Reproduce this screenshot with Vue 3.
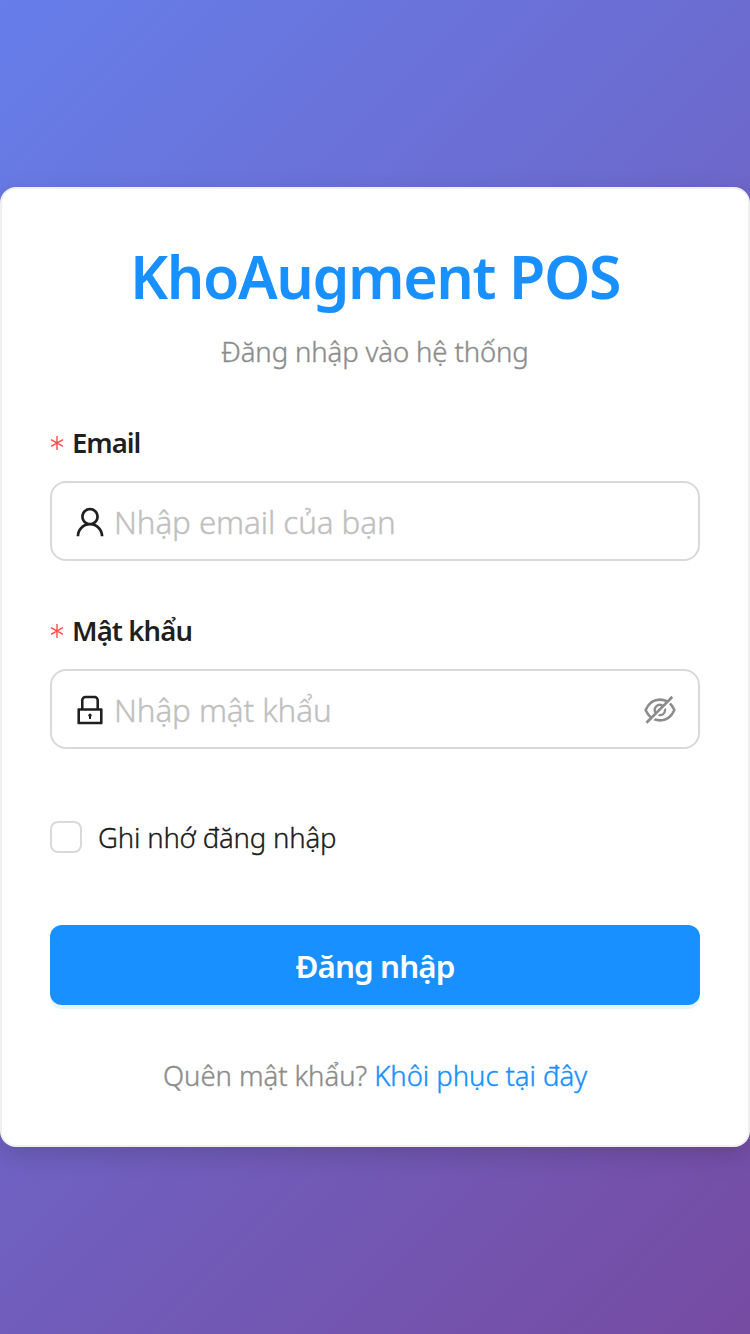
<script setup>
import { ref } from 'vue'
const email = ref('')
const password = ref('')
const remember = ref(false)
</script>

<template>
  <main class="page">
    <form class="card" @submit.prevent>
      <h1>KhoAugment POS</h1>
      <p class="subtitle">Đăng nhập vào hệ thống</p>

      <label class="label" for="email"><svg class="star" viewBox="0 0 14 14"><path d="M7 0V14M1 3.6L13 10.4M13 3.6L1 10.4" /></svg><span class="email-label">Email</span></label>
      <div class="field">
        <svg class="icon" viewBox="64 64 896 896"><path d="M858.5 763.6a374 374 0 0 0-80.6-119.5 375.63 375.63 0 0 0-119.5-80.6c-.4-.2-.8-.3-1.2-.5C719.5 518 760 444.7 760 362c0-137-111-248-248-248S264 225 264 362c0 82.7 40.5 156 102.8 201.1-.4.2-.8.3-1.2.5-44.8 18.9-85 46-119.5 80.6a375.63 375.63 0 0 0-80.6 119.5A371.7 371.7 0 0 0 136 901.8a8 8 0 0 0 8 8.2h60c4.4 0 7.9-3.5 8-7.8 2-77.2 33-149.5 87.8-204.3 56.7-56.7 132-87.9 212.2-87.9s155.5 31.2 212.2 87.9C779 752.7 810 825 812 902.2c.1 4.4 3.6 7.8 8 7.8h60a8 8 0 0 0 8-8.2c-1-47.8-10.9-94.3-29.5-138.2zM512 534c-45.9 0-89.1-17.9-121.6-50.4S340 407.9 340 362c0-45.9 17.9-89.1 50.4-121.6S466.1 190 512 190s89.1 17.9 121.6 50.4S684 316.1 684 362c0 45.9-17.9 89.1-50.4 121.6S557.9 534 512 534z" /></svg>
        <input id="email" v-model="email" type="text" placeholder="Nhập email của bạn" />
      </div>

      <label class="label" for="password"><svg class="star" viewBox="0 0 14 14"><path d="M7 0V14M1 3.6L13 10.4M13 3.6L1 10.4" /></svg><span class="pass-label">Mật khẩu</span></label>
      <div class="field">
        <svg class="icon" viewBox="64 64 896 896"><path d="M832 464h-68V240c0-70.7-57.3-128-128-128H388c-70.7 0-128 57.3-128 128v224h-68c-17.7 0-32 14.3-32 32v384c0 17.7 14.3 32 32 32h640c17.7 0 32-14.3 32-32V496c0-17.7-14.3-32-32-32zM332 240c0-30.9 25.1-56 56-56h248c30.9 0 56 25.1 56 56v224H332V240zm460 600H232V536h560v304zM484 701v53c0 4.4 3.6 8 8 8h40c4.4 0 8-3.6 8-8v-53a48.01 48.01 0 1 0-56 0z" /></svg>
        <input id="password" v-model="password" type="password" placeholder="Nhập mật khẩu" />
        <svg class="icon eye" viewBox="64 64 896 896"><path d="M942.2 486.2Q889.47 375.11 816.7 305l-50.88 50.88C807.31 395.53 843.45 447.4 874.7 512 791.5 684.2 673.4 766 512 766q-72.67 0-133.87-22.38L323 798.75Q408 838 512 838q288.3 0 430.2-300.3a60.29 60.29 0 0 0 0-51.5zm-63.57-320.64L836 122.88a8 8 0 0 0-11.32 0L715.31 232.2Q624.86 186 512 186q-288.3 0-430.2 300.3a60.3 60.3 0 0 0 0 51.5q56.69 119.4 136.5 191.41L112.48 835a8 8 0 0 0 0 11.31L155.17 889a8 8 0 0 0 11.31 0l712.15-712.12a8 8 0 0 0 0-11.32zM149.3 512C232.6 339.8 350.7 258 512 258c54.54 0 104.13 9.36 149.12 28.39l-70.3 70.3a176 176 0 0 0-238.13 238.13l-83.42 83.42C223.1 637.49 183.3 582.28 149.3 512zm246.7 0a112.11 112.11 0 0 1 146.2-106.69L401.31 546.2A112 112 0 0 1 396 512z" /><path d="M508 624c-3.46 0-6.87-.16-10.25-.47l-52.82 52.82a176.09 176.09 0 0 0 227.42-227.42l-52.82 52.82c.31 3.38.47 6.79.47 10.25a111.94 111.94 0 0 1-112 112z" /></svg>
      </div>

      <label class="remember"><input v-model="remember" type="checkbox" /><span>Ghi nhớ đăng nhập</span></label>
      <button type="submit">Đăng nhập</button>
      <p class="recover">Quên mật khẩu? <a href="#">Khôi phục tại đây</a></p>
    </form>
  </main>
</template>

<style>
html, body { margin: 0; }
</style>

<style scoped>
* { box-sizing: border-box; }
.page {
  min-height: 1334px;
  display: flex;
  align-items: center;
  background: linear-gradient(135deg, #667eea 0%, #764ba2 100%);
  font-family: "Noto Sans", "Open Sans", sans-serif;
  font-weight: 300;
  color: rgba(0, 0, 0, .88);
}
.card {
  width: 750px;
  height: 960px;
  padding: 46px 48px;
  border: 2px solid #f0f0f0;
  border-radius: 16px;
  background: #fff;
  box-shadow: 0 8px 24px rgba(0, 0, 0, .15);
}
h1, p { margin: 0; text-align: center; white-space: nowrap; }
h1 { height: 84px; line-height: 82px; color: #1890ff; font-size: 59px; font-weight: 600; letter-spacing: -1.4px; }
.subtitle, .recover, .remember, .field input { -webkit-text-stroke: .4px currentColor; }
.subtitle { height: 44px; margin-top: 10px; line-height: 46px; color: #8c8c8c; font-size: 27.5px; letter-spacing: -.12px; }
.label { height: 44px; margin-top: 48px; display: flex; align-items: center; font-size: 27.5px; font-weight: 600; }
.label span { margin-top: -1px; }
.email-label { letter-spacing: -1px; }
.pass-label { letter-spacing: -.9px; }
.star { width: 14px; height: 14px; margin-right: 8px; fill: none; stroke: #ff4d4f; stroke-width: 1.4; }
.field { height: 80px; margin-top: 16px; padding: 0 22px; display: flex; align-items: center; border: 2px solid #d9d9d9; border-radius: 16px; }
.icon { width: 32px; height: 32px; margin-top: 2px; flex: none; fill: currentColor; }
.field input { flex: 1; min-width: 0; height: 50px; margin-left: 8px; padding: 0; border: 0; outline: 0; background: none; font: 300 31.4px "Noto Sans", sans-serif; letter-spacing: -.1px; }
.field input::placeholder { color: #bfbfbf; opacity: 1; -webkit-text-stroke: .4px #bfbfbf; }
.eye { color: #8c8c8c; }
.remember { display: flex; align-items: center; height: 44px; margin-top: 66px; font-size: 27.5px; letter-spacing: -.17px; }
.remember input { appearance: none; width: 32px; height: 32px; margin: 0 16px 0 0; border: 2px solid #d9d9d9; border-radius: 8px; }
button { width: 100%; height: 80px; margin-top: 66px; padding: 0; border: 0; border-radius: 12px; background: #1890ff; color: #fff; box-shadow: 0 4px 0 rgba(5, 145, 255, .1); font: 600 31.4px "Noto Sans", sans-serif; letter-spacing: -.9px; }
.recover { height: 44px; margin-top: 48px; line-height: 46px; color: #8c8c8c; font-size: 27.5px; letter-spacing: -.05px; }
.recover a { color: #1890ff; -webkit-text-stroke-color: #1890ff; text-decoration: none; }
</style>
